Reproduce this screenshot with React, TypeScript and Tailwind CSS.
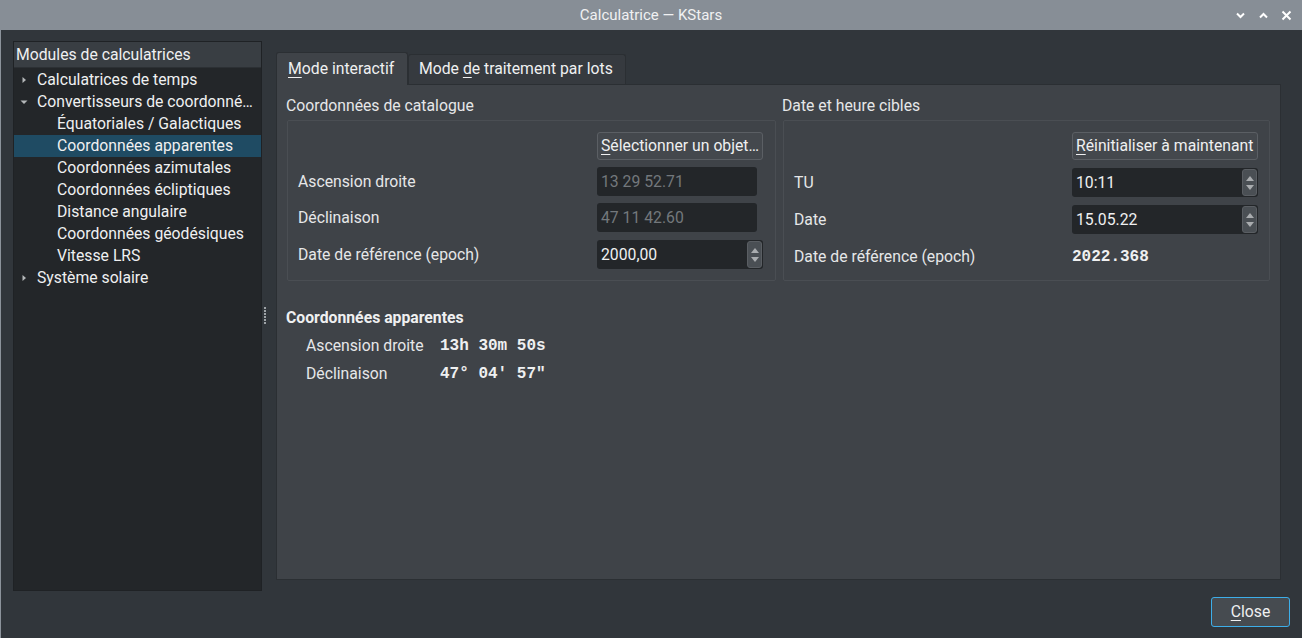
import React from "react";

/**
 * KStars calculator dialog (dark Breeze theme).
 */

const FONT = { fontFamily: "Roboto, 'Noto Sans', sans-serif" };
const MONO = "font-['Liberation_Mono',monospace] font-bold text-[16px]";

type TreeRow = {
  label: string;
  depth: 0 | 1;
  arrow?: "right" | "down";
  selected?: boolean;
};

const rows: TreeRow[] = [
  { label: "Calculatrices de temps", depth: 0, arrow: "right" },
  { label: "Convertisseurs de coordonné…", depth: 0, arrow: "down" },
  { label: "Équatoriales / Galactiques", depth: 1 },
  { label: "Coordonnées apparentes", depth: 1, selected: true },
  { label: "Coordonnées azimutales", depth: 1 },
  { label: "Coordonnées écliptiques", depth: 1 },
  { label: "Distance angulaire", depth: 1 },
  { label: "Coordonnées géodésiques", depth: 1 },
  { label: "Vitesse LRS", depth: 1 },
  { label: "Système solaire", depth: 0, arrow: "right" },
];

function Arrow({ dir }: { dir: "right" | "down" }) {
  return (
    <svg width="8" height="8" viewBox="0 0 8 8" className="shrink-0">
      {dir === "right" ? (
        <path d="M2.5 1 L6 4 L2.5 7 Z" fill="#b4b7b9" />
      ) : (
        <path d="M0.5 2.5 L7.5 2.5 L4 6 Z" fill="#b4b7b9" />
      )}
    </svg>
  );
}

function SpinArrows() {
  return (
    <div className="flex flex-col w-[15px] h-[27px] mr-[1px] bg-[#4a4f54] rounded-[3px] border border-[#5a5e63] items-center justify-center gap-[4px]">
      <svg width="8" height="5" viewBox="0 0 8 5">
        <path d="M0 5 L4 0 L8 5 Z" fill="#a9acaf" />
      </svg>
      <svg width="8" height="5" viewBox="0 0 8 5">
        <path d="M0 0 L8 0 L4 5 Z" fill="#a9acaf" />
      </svg>
    </div>
  );
}

function Button({ children, className = "" }: { children: React.ReactNode; className?: string }) {
  return (
    <div
      className={`h-[28px] flex items-center px-[3px] bg-[#44484d] border border-[#5b5f64] rounded-[3px] text-[#eff0f1] whitespace-nowrap ${className}`}
    >
      {children}
    </div>
  );
}

function LineEdit({ value, disabled, spin, width }: { value: string; disabled?: boolean; spin?: boolean; width: string }) {
  return (
    <div className={`h-[29px] flex items-center bg-[#232629] rounded-[3px] ${width}`}>
      <span className={`flex-1 pl-[4px] ${disabled ? "text-[#73787c]" : "text-[#eff0f1]"}`}>{value}</span>
      {spin && <SpinArrows />}
    </div>
  );
}

function FormRow({ label, offset, children }: { label: string; offset: string; children: React.ReactNode }) {
  return (
    <div className="flex items-center">
      <div className={`${offset} shrink-0 text-[#e6e7e8]`}>{label}</div>
      {children}
    </div>
  );
}

export default function App() {
  return (
    <div style={FONT} className="w-[1302px] h-[638px] flex flex-col bg-[#31363b] text-[15.75px] leading-[22px] text-[#eff0f1] overflow-hidden">
      {/* title bar */}
      <div className="h-[30px] shrink-0 bg-[#878e96] flex items-center relative">
        <div className="flex-1 text-center text-[15px] text-[#f0f1f2]">Calculatrice — KStars</div>
        <div className="absolute right-[10px] top-0 h-full flex items-center gap-[12px]">
          <svg width="11" height="11" viewBox="0 0 11 11">
            <path d="M2 3.5 L5.5 7 L9 3.5" stroke="#fff" strokeWidth="2" fill="none" />
          </svg>
          <svg width="11" height="11" viewBox="0 0 11 11">
            <path d="M2 7.5 L5.5 4 L9 7.5" stroke="#fff" strokeWidth="2" fill="none" />
          </svg>
          <svg width="11" height="11" viewBox="0 0 11 11">
            <path d="M1.5 1.5 L9.5 9.5 M9.5 1.5 L1.5 9.5" stroke="#fff" strokeWidth="2" fill="none" />
          </svg>
        </div>
      </div>

      <div className="flex-1 flex flex-col border-l border-[#8c939b]">
        {/* main row */}
        <div className="flex h-[550px] mt-[11px] pl-[12px]">
          {/* tree */}
          <div className="w-[249px] h-full bg-[#232629] border border-[#1f2225] flex flex-col">
            <div className="h-[26px] bg-[#393e43] border-b border-[#2c3034] flex items-center pl-[2px] pt-[1px] text-[#eff0f1]">
              Modules de calculatrices
            </div>
            <div className="pt-[1px]">
              {rows.map((r) => (
                <div
                  key={r.label}
                  className={`h-[22px] flex items-center whitespace-nowrap ${r.selected ? "bg-[#1f4b63]" : ""}`}
                >
                  {r.depth === 0 ? (
                    <>
                      <div className="w-[23px] pl-[6px] flex items-center">
                        {r.arrow && <Arrow dir={r.arrow} />}
                      </div>
                      <span>{r.label}</span>
                    </>
                  ) : (
                    <span className="pl-[43px]">{r.label}</span>
                  )}
                </div>
              ))}
            </div>
          </div>

          {/* splitter */}
          <div className="w-[14px] flex items-center pl-[2px]">
            <div className="flex flex-col gap-[1px] mt-[-2px]">
              {[0, 1, 2, 3, 4, 5].map((i) => (
                <div key={i} className="w-[2px] h-[2px] bg-[#9ea3a7]" />
              ))}
            </div>
          </div>

          {/* tab widget */}
          <div className="w-[1005px] flex flex-col pt-[10px] pb-[11px]">
            <div className="flex items-end h-[33px] relative z-10">
              <div className="h-[33px] w-[132px] bg-[#3f4348] border border-b-0 border-[#2b2f33] rounded-t-[3px] pl-[11px] pt-[5px] mb-[-1px]">
                <span className="underline underline-offset-[3px]">M</span>ode interactif
              </div>
              <div className="h-[30px] w-[218px] bg-[#363a3f] border border-b-0 border-[#2b2f33] rounded-t-[3px] pl-[10px] pt-[3px]">
                Mode <span className="underline underline-offset-[3px]">d</span>e traitement par lots
              </div>
            </div>
            <div className="flex-1 bg-[#3f4348] border border-[#2b2f33] pl-[9px] pr-[10px] pt-[10px]">
              <div className="flex gap-[6px]">
                {/* catalogue */}
                <div className="w-[490px]">
                  <div className="h-[22px] text-[#e6e7e8]">Coordonnées de catalogue</div>
                  <div className="mt-[3px] ml-[1px] h-[161px] border border-[#4a4e53] rounded-[2px] pl-[10px] pt-[11px] flex flex-col gap-[7px]">
                    <div className="flex pl-[299px]">
                      <Button className="w-[166px]">
                        <span className="underline underline-offset-[3px]">S</span>électionner un objet…
                      </Button>
                    </div>
                    <FormRow label="Ascension droite" offset="w-[299px]">
                      <LineEdit value="13 29 52.71" disabled width="w-[160px]" />
                    </FormRow>
                    <FormRow label="Déclinaison" offset="w-[299px]">
                      <LineEdit value="47 11 42.60" disabled width="w-[160px]" />
                    </FormRow>
                    <div className="mt-[1px]">
                      <FormRow label="Date de référence (epoch)" offset="w-[299px]">
                        <LineEdit value="2000,00" spin width="w-[166px]" />
                      </FormRow>
                    </div>
                  </div>
                </div>
                {/* target date */}
                <div className="w-[488px]">
                  <div className="h-[22px] text-[#e6e7e8]">Date et heure cibles</div>
                  <div className="mt-[3px] ml-[1px] h-[161px] border border-[#4a4e53] rounded-[2px] pl-[10px] pt-[11px] flex flex-col gap-[8px]">
                    <div className="flex pl-[278px]">
                      <Button className="w-[186px]">
                        <span className="underline underline-offset-[3px]">R</span>éinitialiser à maintenant
                      </Button>
                    </div>
                    <FormRow label="TU" offset="w-[278px]">
                      <LineEdit value="10:11" spin width="w-[186px]" />
                    </FormRow>
                    <FormRow label="Date" offset="w-[278px]">
                      <LineEdit value="15.05.22" spin width="w-[186px]" />
                    </FormRow>
                    <div className="h-[29px] flex items-center">
                      <FormRow label="Date de référence (epoch)" offset="w-[278px]">
                        <span className={MONO}>2022.368</span>
                      </FormRow>
                    </div>
                  </div>
                </div>
              </div>

              {/* apparent coordinates */}
              <div className="mt-[26px] font-bold">Coordonnées apparentes</div>
              <div className="mt-[6px] pl-[20px] flex flex-col gap-[6px]">
                <div className="flex items-center">
                  <span className="w-[134px] text-[#e6e7e8]">Ascension droite</span>
                  <span className={MONO}>13h 30m 50s</span>
                </div>
                <div className="flex items-center">
                  <span className="w-[134px] text-[#e6e7e8]">Déclinaison</span>
                  <span className={MONO}>47° 04' 57"</span>
                </div>
              </div>
            </div>
          </div>
        </div>

        {/* buttons */}
        <div className="flex justify-end pr-[12px] mt-[6px]">
          <div className="w-[79px] h-[30px] bg-[#464b50] border border-[#3daee9] rounded-[3px] flex items-center justify-center">
            <span>
              <span className="underline underline-offset-[3px]">C</span>lose
            </span>
          </div>
        </div>
      </div>
    </div>
  );
}
